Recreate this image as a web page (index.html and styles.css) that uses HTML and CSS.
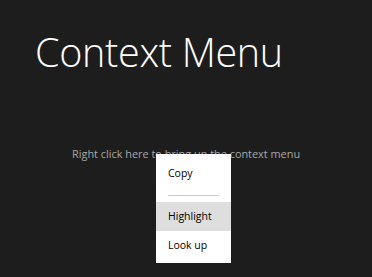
FILE: index.html
```html
<!DOCTYPE html>
<html lang="en">
<head>
    <meta charset="UTF-8">
    <title>Context Menu</title>
    <link rel="stylesheet" href="styles.css">
</head>
<body>
    <div class="page">
        <h1 class="title">Context Menu</h1>
        <div class="target">Right click here to bring up the context menu</div>
    </div>

    <div class="menu">
        <div class="menu-item">Copy</div>
        <div class="separator"></div>
        <div class="menu-item active">Highlight</div>
        <div class="menu-item">Look up</div>
    </div>
</body>
</html>
```

FILE: styles.css
```css
html, body { margin: 0; height: 100%; }
body { background: #1d1d1d; color: #fff; font-family: "Open Sans", "Noto Sans", sans-serif; overflow: hidden; }
.page { padding: 26px 0 0 35px; }
.title { margin: 0; font-size: 39.5px; font-weight: 300; line-height: 52px; letter-spacing: -0.3px; }
.target { margin: 68px 0 0 37px; font-size: 10.9px; color: #a8a8a8; }
.menu { position: absolute; left: 156px; top: 154px; width: 75px; background: #fff; color: #000; padding: 5px 0 3px; font-size: 10.5px; }
.menu-item { height: 29px; line-height: 29px; padding-left: 12px; }
.menu-item.active { background: #dedede; }
.separator { height: 1px; background: #c8c8c8; margin: 7px 12px 6px; }
```
